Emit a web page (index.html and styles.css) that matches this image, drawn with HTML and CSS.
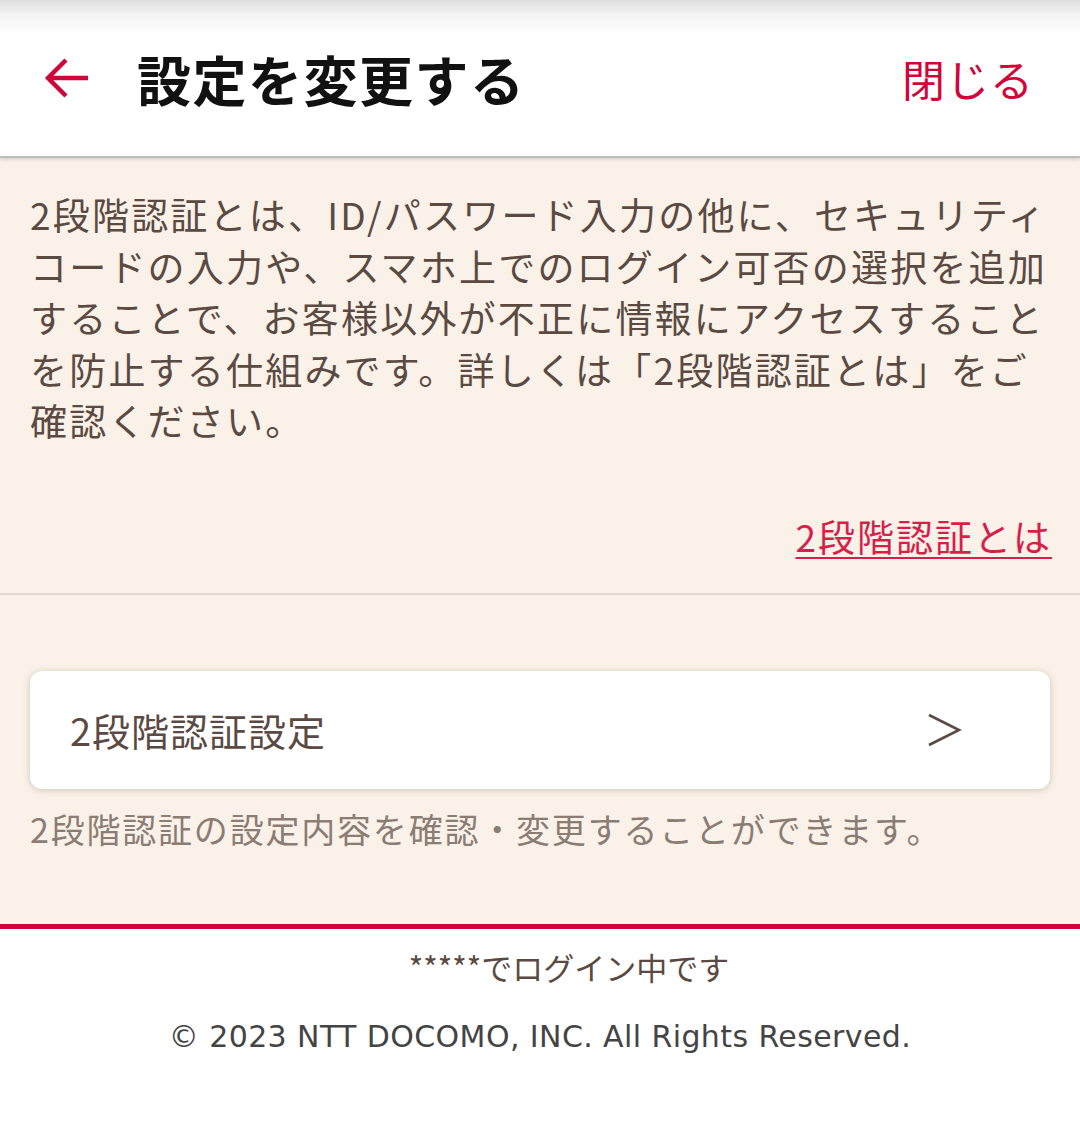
FILE: index.html
```html
<!DOCTYPE html>
<html lang="ja">
<head>
<meta charset="utf-8">
<title>設定を変更する</title>
<link rel="stylesheet" href="styles.css">
</head>
<body>
<header class="topbar">
  <div class="topbar-inner">
    <a class="back" href="#" aria-label="戻る">
      <svg width="48" height="48" viewBox="0 0 48 48">
        <path d="M46 24H6M24 6L6 24L24 42" fill="none" stroke="#d0063a" stroke-width="4.5" stroke-linecap="butt" stroke-linejoin="miter"/>
      </svg>
    </a>
    <h1 class="title">設定を変更する</h1>
    <a class="close" href="#">閉じる</a>
  </div>
</header>

<main class="content">
  <section class="intro">
    <p class="intro-text">2段階認証とは、ID/パスワード入力の他に、セキュリティコードの入力や、スマホ上でのログイン可否の選択を追加することで、お客様以外が不正に情報にアクセスすることを防止する仕組みです。詳しくは「2段階認証とは」をご確認ください。</p>
    <div class="intro-link"><a href="#">2段階認証とは</a></div>
  </section>

  <section class="settings">
    <a class="card" href="#">
      <span class="card-label">2段階認証設定</span>
      <svg class="chevron" width="36" height="36" viewBox="0 0 36 36">
        <path d="M3 2L33 17L3 32" fill="none" stroke="#5b4a42" stroke-width="2.6"/>
      </svg>
    </a>
    <p class="card-note">2段階認証の設定内容を確認・変更することができます。</p>
  </section>
</main>

<footer class="footer">
  <p class="login">*****でログイン中です</p>
  <p class="copy">© 2023 NTT DOCOMO, INC. All Rights Reserved.</p>
</footer>
</body>
</html>
```

FILE: styles.css
```css
* { box-sizing: border-box; }

html, body {
  margin: 0;
  padding: 0;
  background: #ffffff;
}

body {
  font-family: "Noto Sans CJK JP", "Noto Sans", sans-serif;
  color: #5b4a42;
}

a { text-decoration: none; }

/* header */
.topbar {
  background: linear-gradient(#dedede 0px, #f3f3f3 14px, #ffffff 34px);
  height: 158px;
  border-bottom: 2px solid #bdbdbd;
  box-shadow: 0 2px 3px rgba(0,0,0,0.12);
  position: relative;
  z-index: 1;
}

.topbar-inner {
  height: 156px;
  display: flex;
  align-items: center;
  padding: 0 46px 0 42px;
}

.back {
  display: flex;
  width: 48px;
  height: 48px;
  margin-right: 47px;
}

.title {
  margin: 0;
  font-size: 54px;
  font-weight: 700;
  color: #111;
  letter-spacing: 1.5px;
  flex: 1;
}

.close {
  color: #d0063a;
  font-size: 43px;
  letter-spacing: 1px;
}

/* content */
.content {
  background: #faf2e9;
}

.intro {
  padding: 31px 30px 31px 30px;
  border-bottom: 2px solid #e2d8ce;
}

.intro-text {
  margin: 0;
  font-size: 37px;
  line-height: 51.5px;
  letter-spacing: 2.2px;
}

.intro-link {
  display: flex;
  justify-content: flex-end;
  margin-top: 64px;
  line-height: 51px;
}

.intro-link a {
  color: #d81f4a;
  font-size: 37px;
  letter-spacing: 2px;
  text-decoration: underline;
  text-decoration-thickness: 2px;
  text-underline-offset: 5px;
  margin-right: -2px;
}

.settings {
  padding: 76px 30px 73px;
  border-bottom: 5px solid #d0063a;
}

.card {
  display: flex;
  align-items: center;
  justify-content: space-between;
  height: 118px;
  background: #fff;
  border-radius: 12px;
  box-shadow: 0 1px 7px rgba(120, 95, 70, 0.32);
  padding: 0 88px 0 40px;
}

.card-label {
  color: #5b4a42;
  font-size: 38px;
  letter-spacing: 1px;
}

.chevron {
  margin-top: 2px;
}

.card-note {
  margin: 18px 0 0;
  font-size: 34px;
  letter-spacing: 1.8px;
  color: #8b7c74;
  line-height: 44px;
}

/* footer */
.footer {
  text-align: center;
  padding-top: 14px;
}

.login {
  margin: 0;
  padding-left: 58px;
  font-size: 31px;
  color: #5b4a42;
  line-height: 48px;
}

.copy {
  margin: 26px 0 0;
  font-family: "DejaVu Sans", sans-serif;
  font-size: 30px;
  letter-spacing: 0.4px;
  color: #444;
  line-height: 40px;
}
```
